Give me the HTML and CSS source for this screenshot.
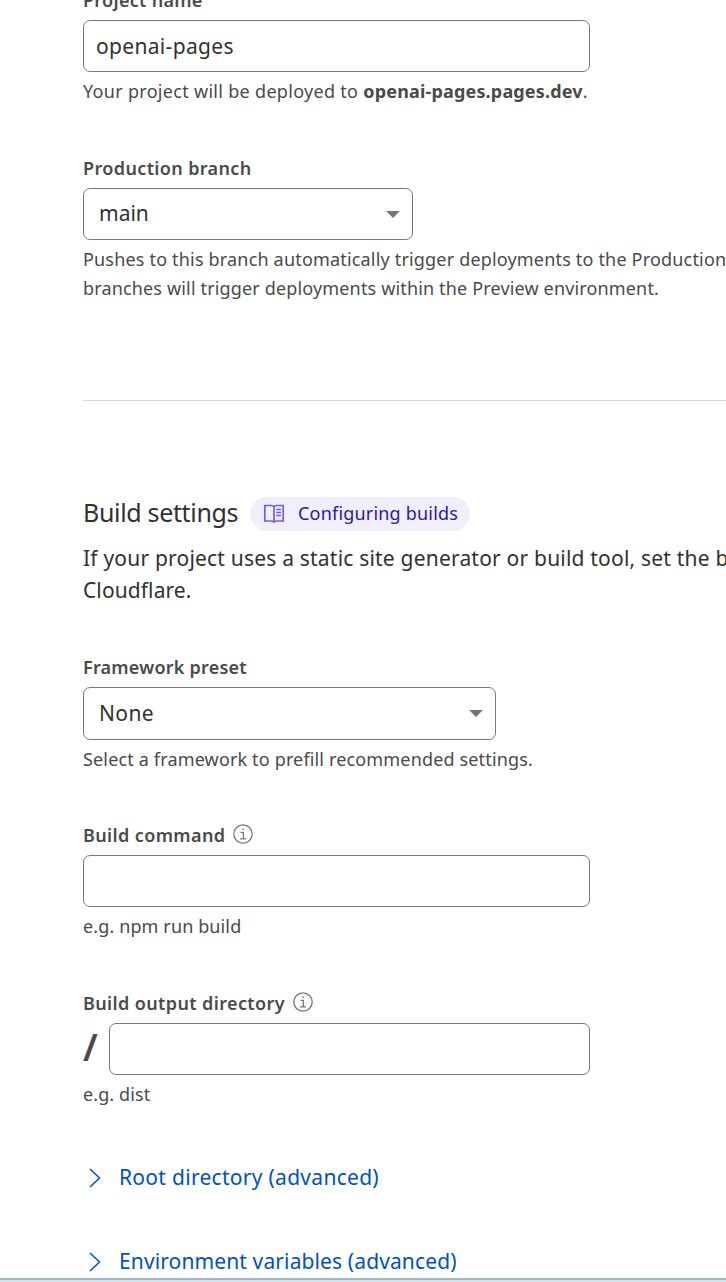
FILE: index.html
```html
<!DOCTYPE html>
<html lang="en">
<head>
<meta charset="utf-8">
<title>Set up builds and deployments</title>
<link rel="stylesheet" href="styles.css">
</head>
<body>
<main class="page">
  <section class="fields fields-top">
    <div class="field">
      <label class="label"><span class="t-name">Project name</span></label>
      <div class="input"><span class="t-value">openai-pages</span></div>
      <p class="help"><span class="t-deploy">Your project will be deployed to </span><strong class="t-domain">openai-pages.pages.dev</strong>.</p>
    </div>
    <div class="field">
      <label class="label"><span class="t-branch">Production branch</span></label>
      <div class="select select-branch"><span class="t-main">main</span><svg class="caret" viewBox="0 0 14 7"><path d="M0 0h14L7 7z"/></svg></div>
      <p class="help"><span class="t-push1">Pushes to this branch automatically trigger deployments to the Production</span><br><span class="t-push2">branches will trigger deployments within the Preview environment.</span></p>
    </div>
  </section>
  <hr class="divider">
  <header class="heading">
    <h2 class="title">Build settings</h2>
    <a class="pill">
      <svg class="book" viewBox="0 0 22 20" fill="none" stroke="currentColor" stroke-width="1.7"><path d="M11 2.700C10.500 1.900 9.500 1.500 8.500 1.500H1.800V17H8.500c1.200 0 2 .4 2.500 1.300M11 2.700c.5-.8 1.500-1.200 2.500-1.200h6.700V17h-6.700c-1.200 0-2 .4-2.500 1.300M11 2.700v15.600"/><path stroke-width="1.500" d="M13.300 5.500h4.700M13.300 8.500h4.700M13.300 11.500h4.700"/></svg>
      <span class="t-config">Configuring builds</span>
    </a>
  </header>
  <p class="intro"><span class="t-intro">If your project uses a static site generator or build tool, set the build</span><br><span class="t-cloud">Cloudflare.</span></p>
  <section class="fields">
    <div class="field field-preset">
      <label class="label"><span class="t-frame">Framework preset</span></label>
      <div class="select select-preset"><span class="t-none">None</span><svg class="caret" viewBox="0 0 14 7"><path d="M0 0h14L7 7z"/></svg></div>
      <p class="help"><span class="t-select">Select a framework to prefill recommended settings.</span></p>
    </div>
    <div class="field">
      <label class="label"><span class="t-command">Build command</span><svg class="info" viewBox="0 0 20 20" fill="none" stroke="currentColor" stroke-width="1.300"><circle cx="10" cy="10" r="9.200"/><path d="M7.500 8.300h2.800v6.500M7 14.800h6M9.300 5.200h1.700"/></svg></label>
      <div class="input"></div>
      <p class="help"><span class="t-npm">e.g. npm run build</span></p>
    </div>
    <div class="field">
      <label class="label"><span class="t-output">Build output directory</span><svg class="info" viewBox="0 0 20 20" fill="none" stroke="currentColor" stroke-width="1.300"><circle cx="10" cy="10" r="9.200"/><path d="M7.500 8.300h2.800v6.500M7 14.800h6M9.300 5.200h1.700"/></svg></label>
      <div class="path-row"><span class="slash">/</span><div class="input input-path"></div></div>
      <p class="help"><span class="t-dist">e.g. dist</span></p>
    </div>
  </section>
  <nav class="links">
    <a class="link"><svg class="chevron" viewBox="0 0 12 20" fill="none" stroke="currentColor" stroke-width="1.500"><path d="M1 1l9.500 9L1 19"/></svg><span class="t-root">Root directory (advanced)</span></a>
    <a class="link"><svg class="chevron" viewBox="0 0 12 20" fill="none" stroke="currentColor" stroke-width="1.500"><path d="M1 1l9.500 9L1 19"/></svg><span class="t-env">Environment variables (advanced)</span></a>
  </nav>
</main>
<footer class="bottom-bar"></footer>
</body>
</html>
```
FILE: styles.css
```css
* { box-sizing: border-box; }
html { height: 1282px; overflow: hidden; }
body {
  margin: 0;
  width: 726px;
  height: 1282px;
  overflow: hidden;
  display: flex;
  flex-direction: column;
  background: #fff;
  color: #313131;
  font-family: "Noto Sans", "Open Sans", sans-serif;
  white-space: nowrap;
}
p, h2 { margin: 0; }
.page { height: 1278px; flex: none; padding-left: 83px; overflow: hidden; }
.fields { display: flex; flex-direction: column; gap: 48px; }
.fields-top { margin-top: -14px; }
.field { display: flex; flex-direction: column; gap: 5px; align-items: flex-start; }
.field-preset { margin-bottom: -1px; }
.label {
  display: flex;
  align-items: center;
  gap: 8px;
  height: 29px;
  font-size: 18px;
  font-weight: 600;
  line-height: 29px;
  color: #4a4a4a;
}
.input, .select {
  display: flex;
  align-items: center;
  width: 507px;
  height: 52px;
  border: 1px solid #797979;
  border-radius: 7px;
  padding: 0 12px;
  font-size: 21px;
}
.select { justify-content: space-between; padding: 0 12px 0 15px; }
.select span { padding-bottom: 2px; }
.select-branch { width: 330px; }
.select-preset { width: 413px; height: 53px; }
.caret { width: 14px; height: 7px; fill: #72767b; }
.help { font-size: 18px; line-height: 29px; color: #4a4a4a; }
.divider { margin: 97px 0 96px; height: 1px; border: 0; background: #d9d9d9; }
.heading { display: flex; align-items: center; gap: 12px; height: 34px; }
.title {
  width: 155px;
  padding-bottom: 5px;
  font-size: 25px;
  line-height: 32px;
  font-weight: 400;
  letter-spacing: -0.33px;
}
.pill {
  display: flex;
  align-items: center;
  gap: 13px;
  width: 220px;
  height: 34px;
  padding-left: 13px;
  border-radius: 17px;
  background: #f1eefd;
  color: #2c1aa0;
  font-size: 18px;
}
.book { width: 22px; height: 20px; color: #6e5fe8; }
.intro { margin: 11px 0 47px; font-size: 21px; line-height: 32px; }
.info { width: 20px; height: 20px; margin-bottom: 3px; color: #777; }
.path-row { display: flex; align-items: center; height: 52px; }
.slash { width: 26px; padding-bottom: 6px; font-size: 37px; font-weight: 600; color: #4a4a4a; }
.input-path { width: 481px; }
.links { display: flex; flex-direction: column; gap: 52px; margin-top: 53px; }
.link { display: flex; align-items: center; gap: 18px; height: 32px; padding-left: 6px; font-size: 21px; color: #0051c3; }
.link span { padding-bottom: 2px; }
.chevron { width: 12px; height: 20px; }
.bottom-bar { flex: none; height: 4px; border-top: 2px solid #a5b5bc; background: #d0e3ea; }

/* Tracking per text run */
.t-name { letter-spacing: 0.3px; }
.t-value { letter-spacing: 0.32px; }
.t-deploy { letter-spacing: 0.3px; }
.t-domain { letter-spacing: 0.17px; }
.t-branch { letter-spacing: 0.37px; }
.t-push1 { letter-spacing: 0.18px; }
.t-push2 { letter-spacing: 0.155px; }
.t-config { letter-spacing: 0.2px; padding-bottom: 2px; }
.t-intro { letter-spacing: 0.2px; }
.t-cloud { letter-spacing: 0.1px; }
.t-frame { letter-spacing: 0.23px; }
.t-none { letter-spacing: 0.4px; }
.t-select { letter-spacing: 0.155px; }
.t-command { letter-spacing: 0.38px; }
.t-npm { letter-spacing: 0.12px; }
.t-output { letter-spacing: 0.38px; }
.t-dist { letter-spacing: 0.1px; }
.t-root { letter-spacing: 0.29px; }
.t-env { letter-spacing: 0.12px; }
```
